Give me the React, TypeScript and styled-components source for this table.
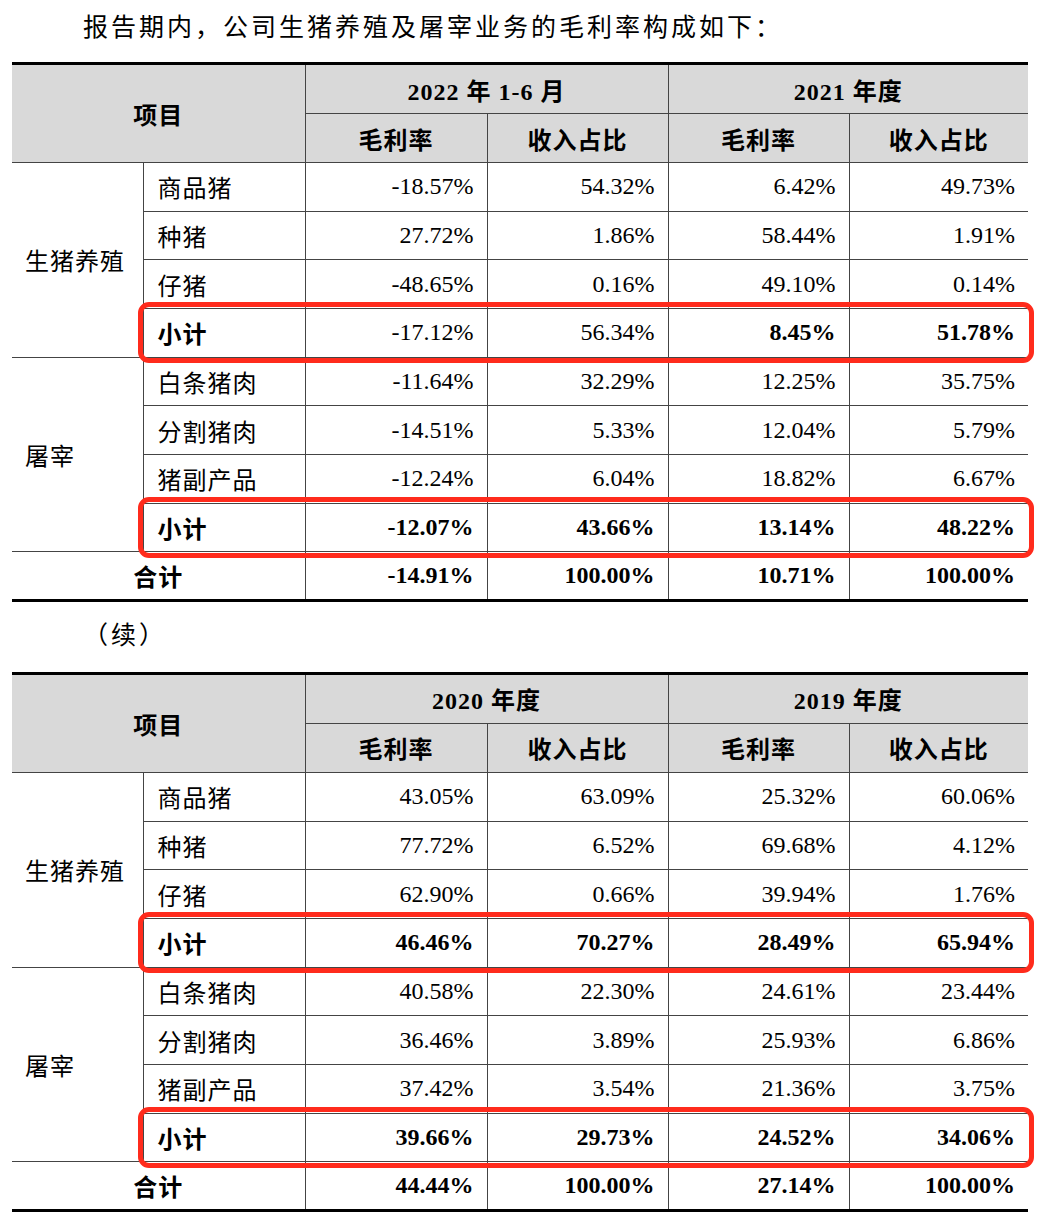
import React from "react";
import styled, { createGlobalStyle } from "styled-components";

const GlobalStyle = createGlobalStyle`
  html, body { margin: 0; padding: 0; background: #ffffff; }
  body {
    font-family: "Liberation Serif", "Noto Sans CJK SC", serif;
    color: #000;
  }
`;

const Page = styled.div`
  width: 1042px;
  padding: 14px 0 0 12px;
  box-sizing: border-box;
`;

const Para = styled.p<{ $top: number; $bottom: number }>`
  margin: ${(p) => p.$top}px 0 ${(p) => p.$bottom}px 71px;
  font-size: 25px;
  line-height: 28px;
  letter-spacing: 3px;
  font-family: "Liberation Serif", "Noto Sans CJK SC", serif;
  font-weight: 400;
`;

const Table = styled.table`
  width: 1016px;
  table-layout: fixed;
  border-collapse: collapse;
  border-top: 3px solid #000;
  border-bottom: 3px solid #000;
  font-size: 24px;
`;

const Row = styled.tr<{ $h: number }>`
  height: ${(p) => p.$h}px;
`;

const HeadCell = styled.th`
  background: #d9d9d9;
  font-weight: 700;
  text-align: center;
  padding: 0;
  border: 1px solid #444;
  border-top: none;
  letter-spacing: 1px;
  &:first-child { border-left: none; }
  &:last-child { border-right: none; }
`;

const GroupCell = styled.td`
  padding: 0 0 0 13px;
  text-align: left;
  border-bottom: 1px solid #444;
  border-right: 1px solid #444;
  border-left: none;
  letter-spacing: 1px;
  font-weight: 400;
`;

const LabelCell = styled.td<{ $bold?: boolean }>`
  position: relative;
  padding: 0 0 0 14px;
  text-align: left;
  border: 1px solid #444;
  font-weight: ${(p) => (p.$bold ? 700 : 400)};
  letter-spacing: 1px;
`;

const TotalLabel = styled.td`
  padding: 0;
  text-align: center;
  border: 1px solid #444;
  border-left: none;
  border-bottom: none;
  font-weight: 700;
  letter-spacing: 1px;
`;

const NumCell = styled.td<{ $bold?: boolean; $last?: boolean }>`
  padding: 0 13px 0 0;
  text-align: right;
  border: 1px solid #444;
  border-right: ${(p) => (p.$last ? "none" : "1px solid #444")};
  font-weight: ${(p) => (p.$bold ? 700 : 400)};
  font-family: "Liberation Serif", serif;
`;

const TotalNum = styled(NumCell)`
  border-bottom: none;
`;

const Highlight = styled.span`
  position: absolute;
  left: -6px;
  top: -7px;
  width: 896px;
  height: 61px;
  box-sizing: border-box;
  border: 5px solid #ff2b1c;
  border-radius: 11px;
  pointer-events: none;
`;

type Cell = { v: string; b?: boolean };
type Item = { label: string; cells: Cell[]; subtotal?: boolean };
type Group = { name: string; items: Item[] };
type TableData = {
  periods: [string, string];
  groups: Group[];
  total: Cell[];
};

const c = (v: string, b = false): Cell => ({ v, b });

const table1: TableData = {
  periods: ["2022 年 1-6 月", "2021 年度"],
  groups: [
    {
      name: "生猪养殖",
      items: [
        { label: "商品猪", cells: [c("-18.57%"), c("54.32%"), c("6.42%"), c("49.73%")] },
        { label: "种猪", cells: [c("27.72%"), c("1.86%"), c("58.44%"), c("1.91%")] },
        { label: "仔猪", cells: [c("-48.65%"), c("0.16%"), c("49.10%"), c("0.14%")] },
        {
          label: "小计",
          subtotal: true,
          cells: [c("-17.12%"), c("56.34%"), c("8.45%", true), c("51.78%", true)],
        },
      ],
    },
    {
      name: "屠宰",
      items: [
        { label: "白条猪肉", cells: [c("-11.64%"), c("32.29%"), c("12.25%"), c("35.75%")] },
        { label: "分割猪肉", cells: [c("-14.51%"), c("5.33%"), c("12.04%"), c("5.79%")] },
        { label: "猪副产品", cells: [c("-12.24%"), c("6.04%"), c("18.82%"), c("6.67%")] },
        {
          label: "小计",
          subtotal: true,
          cells: [c("-12.07%", true), c("43.66%", true), c("13.14%", true), c("48.22%", true)],
        },
      ],
    },
  ],
  total: [c("-14.91%", true), c("100.00%", true), c("10.71%", true), c("100.00%", true)],
};

const table2: TableData = {
  periods: ["2020 年度", "2019 年度"],
  groups: [
    {
      name: "生猪养殖",
      items: [
        { label: "商品猪", cells: [c("43.05%"), c("63.09%"), c("25.32%"), c("60.06%")] },
        { label: "种猪", cells: [c("77.72%"), c("6.52%"), c("69.68%"), c("4.12%")] },
        { label: "仔猪", cells: [c("62.90%"), c("0.66%"), c("39.94%"), c("1.76%")] },
        {
          label: "小计",
          subtotal: true,
          cells: [c("46.46%", true), c("70.27%", true), c("28.49%", true), c("65.94%", true)],
        },
      ],
    },
    {
      name: "屠宰",
      items: [
        { label: "白条猪肉", cells: [c("40.58%"), c("22.30%"), c("24.61%"), c("23.44%")] },
        { label: "分割猪肉", cells: [c("36.46%"), c("3.89%"), c("25.93%"), c("6.86%")] },
        { label: "猪副产品", cells: [c("37.42%"), c("3.54%"), c("21.36%"), c("3.75%")] },
        {
          label: "小计",
          subtotal: true,
          cells: [c("39.66%", true), c("29.73%", true), c("24.52%", true), c("34.06%", true)],
        },
      ],
    },
  ],
  total: [c("44.44%", true), c("100.00%", true), c("27.14%", true), c("100.00%", true)],
};

const COLS = [131, 162, 182, 181, 181, 179];
const ROW_H = 48.67;

function MarginTable({ data }: { data: TableData }) {
  return (
    <Table>
      <colgroup>
        {COLS.map((w, i) => (
          <col key={i} style={{ width: w }} />
        ))}
      </colgroup>
      <thead>
        <Row $h={50}>
          <HeadCell rowSpan={2} colSpan={2}>
            项目
          </HeadCell>
          <HeadCell colSpan={2}>{data.periods[0]}</HeadCell>
          <HeadCell colSpan={2}>{data.periods[1]}</HeadCell>
        </Row>
        <Row $h={49}>
          <HeadCell>毛利率</HeadCell>
          <HeadCell>收入占比</HeadCell>
          <HeadCell>毛利率</HeadCell>
          <HeadCell>收入占比</HeadCell>
        </Row>
      </thead>
      <tbody>
        {data.groups.map((g) =>
          g.items.map((it, i) => (
            <Row $h={ROW_H} key={g.name + it.label}>
              {i === 0 && <GroupCell rowSpan={g.items.length}>{g.name}</GroupCell>}
              <LabelCell $bold={it.subtotal}>
                {it.label}
                {it.subtotal && <Highlight />}
              </LabelCell>
              {it.cells.map((cell, k) => (
                <NumCell key={k} $bold={cell.b} $last={k === 3}>
                  {cell.v}
                </NumCell>
              ))}
            </Row>
          ))
        )}
        <Row $h={ROW_H}>
          <TotalLabel colSpan={2}>合计</TotalLabel>
          {data.total.map((cell, k) => (
            <TotalNum key={k} $bold={cell.b} $last={k === 3}>
              {cell.v}
            </TotalNum>
          ))}
        </Row>
      </tbody>
    </Table>
  );
}

export default function App() {
  return (
    <Page>
      <GlobalStyle />
      <Para $top={0} $bottom={20}>报告期内，公司生猪养殖及屠宰业务的毛利率构成如下：</Para>
      <MarginTable data={table1} />
      <Para $top={20} $bottom={22}>（续）</Para>
      <MarginTable data={table2} />
    </Page>
  );
}
